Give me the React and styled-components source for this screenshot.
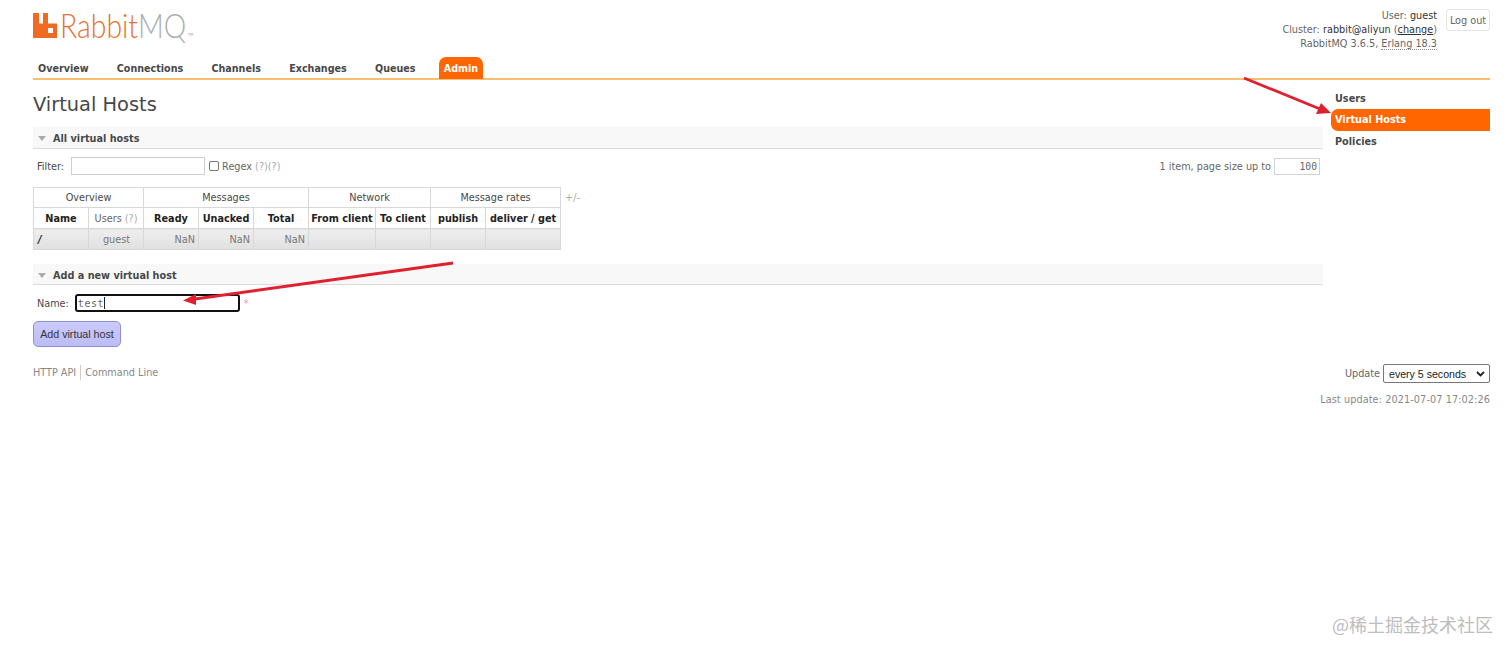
import React from "react";
import styled, { createGlobalStyle } from "styled-components";

const Global = createGlobalStyle`
  html, body { margin: 0; padding: 0; background: #fff; }
  body { font-family: "DejaVu Sans", Verdana, sans-serif; font-size: 9.7px; color: #484848; }
`;

const Page = styled.div`
  position: relative;
  width: 1512px;
  height: 653px;
  overflow: hidden;
  padding: 0 22px 0 33px;
  box-sizing: border-box;
`;

const Header = styled.header`
  height: 80px;
  box-sizing: border-box;
  border-bottom: 2px solid #fbbd72;
  display: flex;
  flex-direction: column;
  justify-content: space-between;
`;

const TopRow = styled.div`
  display: flex;
  justify-content: space-between;
  align-items: flex-start;
`;

const Logo = styled.div`
  display: flex;
  align-items: flex-start;
  gap: 3px;
  margin-top: 13px;
  height: 25px;
  svg { flex: none; }
`;

const LogoText = styled.div`
  display: flex;
  transform: scaleX(0.86);
  transform-origin: left center;
`;

const LogoWord = styled.span`
  font-family: "Lato", sans-serif;
  font-weight: 300;
  font-size: 33px;
  line-height: 25px;
  color: ${(p) => p.$color};
`;

const LogoMark = styled.span`
  font-size: 4px;
  line-height: 6px;
  color: #aaa;
  align-self: flex-end;
  margin-left: 2px;
`;

const Status = styled.div`
  display: flex;
  gap: 9px;
  margin-top: 9px;
`;

const StatusLines = styled.div`
  text-align: right;
  line-height: 14px;
  color: #666;
`;

const Strong = styled.span`
  color: #333;
`;

const Underlined = styled.span`
  color: #333;
  text-decoration: underline;
`;

const Abbr = styled.span`
  border-bottom: 1px dotted #888;
`;

const LogoutButton = styled.div`
  width: 44px;
  height: 22px;
  box-sizing: border-box;
  border: 1px solid #e4e4e4;
  border-radius: 3px;
  color: #666;
  display: flex;
  align-items: center;
  justify-content: center;
`;

const Nav = styled.nav`
  display: flex;
  gap: 18.200px;
  margin-bottom: -1px;
`;

const NavItem = styled.div`
  height: 22px;
  padding: 0 5px;
  display: flex;
  align-items: center;
  font-size: 9.600px;
  font-weight: 700;
  color: ${(p) => (p.$active ? "#fff" : "#484848")};
  background: ${(p) => (p.$active ? "#ff6600" : "transparent")};
  border-radius: 7px 7px 0 0;
`;

const Body = styled.div`
  display: flex;
  align-items: flex-start;
`;

const Main = styled.main`
  width: 1290px;
  flex: none;
`;

const Title = styled.h1`
  margin: 0;
  height: 47px;
  font-size: 19.400px;
  font-weight: 400;
  line-height: 49px;
  color: #484848;
`;

const Side = styled.aside`
  margin-left: 8px;
  flex: 1;
  padding-top: 7.500px;
`;

const SideItem = styled.div`
  height: 21.500px;
  box-sizing: border-box;
  padding-left: 4px;
  display: flex;
  align-items: center;
  font-weight: 700;
  color: ${(p) => (p.$active ? "#fff" : "#484848")};
  background: ${(p) => (p.$active ? "#ff6600" : "transparent")};
  border-radius: 7px 0 0 7px;
`;

const SectionBar = styled.div`
  height: 21.500px;
  box-sizing: border-box;
  background: #f8f8f8;
  border-bottom: 1px solid #dcdcdc;
  display: flex;
  align-items: center;
  gap: 7px;
  padding-left: 5px;
  padding-top: 2px;
  font-weight: 700;
  color: #484848;
`;

const Triangle = styled.span`
  width: 0;
  height: 0;
  border-left: 4.500px solid transparent;
  border-right: 4.500px solid transparent;
  border-top: 5px solid #aaa;
`;

const FilterRow = styled.div`
  display: flex;
  align-items: center;
  height: 18px;
  margin-top: 8.500px;
  padding-left: 4px;
`;

const Muted = styled.span`
  color: ${(p) => p.$c || "#666"};
`;

const TextInput = styled.div`
  box-sizing: border-box;
  width: ${(p) => p.$w}px;
  height: 18px;
  border: 1px solid #cfcfcf;
  background: #fff;
  margin: 0 4px 0 7px;
`;

const CheckBox = styled.span`
  box-sizing: border-box;
  width: 10px;
  height: 10px;
  border: 1px solid #777;
  border-radius: 2px;
  margin-right: 3px;
`;

const PageSize = styled.div`
  margin-left: auto;
  margin-right: 3px;
  display: flex;
  align-items: center;
  color: #666;
`;

const SizeBox = styled.div`
  box-sizing: border-box;
  width: 46px;
  height: 17px;
  border: 1px solid #d4d4d4;
  margin-left: 3px;
  text-align: right;
  padding-right: 2px;
  line-height: 15px;
  font-family: "DejaVu Sans Mono", monospace;
  font-size: 9.700px;
  color: #666;
`;

const TableWrap = styled.div`
  display: flex;
  align-items: flex-start;
  margin-top: 12.300px;
`;

const Table = styled.table`
  border-collapse: collapse;
  table-layout: fixed;
  width: 527px;
`;

const GroupCell = styled.th`
  height: 20px;
  box-sizing: border-box;
  padding: 0;
  font-weight: 400;
  color: #484848;
  border: 1px solid #d8d8d8;
  background: #fff;
`;

const HeadCell = styled.th`
  height: 21px;
  box-sizing: border-box;
  padding: 0;
  font-weight: ${(p) => (p.$light ? 400 : 700)};
  color: ${(p) => (p.$light ? "#666" : "#222")};
  border: 1px solid #d8d8d8;
  background: #fff;
  white-space: nowrap;
`;

const DataCell = styled.td`
  height: 21px;
  box-sizing: border-box;
  padding: 0 3px 0 4px;
  border: 1px solid #d8d8d8;
  background: linear-gradient(#eeeeee, #e0e0e0);
  color: ${(p) => (p.$strong ? "#222" : "#777")};
  font-weight: ${(p) => (p.$strong ? 700 : 400)};
  font-style: ${(p) => (p.$strong ? "italic" : "normal")};
  text-align: ${(p) => p.$align || "right"};
`;

const PlusMinus = styled.span`
  margin: 5px 0 0 4px;
  color: #aaa;
`;

const AddSection = styled.section`
  margin-top: 13.700px;
`;

const NameRow = styled.div`
  display: flex;
  align-items: center;
  height: 18px;
  margin-top: 9px;
  padding-left: 4px;
`;

const NameInput = styled.div`
  box-sizing: border-box;
  width: 165px;
  height: 18px;
  margin-left: 6px;
  border: 2px solid #111;
  border-radius: 3px;
  padding-left: 1px;
  display: flex;
  align-items: center;
  font-family: "DejaVu Sans Mono", monospace;
  font-size: 10px;
  letter-spacing: 0.500px;
  color: #666;
`;

const Caret = styled.span`
  width: 1px;
  height: 12px;
  background: #222;
`;

const Required = styled.span`
  color: #e99;
  margin-left: 4px;
`;

const AddButton = styled.div`
  box-sizing: border-box;
  width: 88px;
  height: 26px;
  margin-top: 9px;
  padding-bottom: 1px;
  border: 1px solid #8f8fd8;
  border-radius: 5px;
  background: linear-gradient(#cbcbff, #bcbcf5);
  color: #333;
  font-family: "Liberation Sans", Arial, sans-serif;
  font-size: 10.700px;
  display: flex;
  align-items: center;
  justify-content: center;
`;

const Footer = styled.footer`
  display: flex;
  justify-content: space-between;
  align-items: flex-start;
  margin-top: 17px;
  width: 1457px;
`;

const FooterLinks = styled.div`
  display: flex;
  align-items: center;
  margin-top: 1px;
  color: #888;
`;

const FooterLink = styled.span`
  padding: 0 ${(p) => (p.$last ? 0 : 4)}px 0 ${(p) => (p.$last ? 4 : 0)}px;
  border-left: ${(p) => (p.$last ? "1px solid #ccc" : "none")};
  line-height: 15px;
`;

const UpdateBox = styled.div`
  text-align: right;
  color: #666;
`;

const UpdateRow = styled.div`
  display: flex;
  align-items: center;
  justify-content: flex-end;
  gap: 3px;
`;

const Select = styled.div`
  box-sizing: border-box;
  width: 107px;
  height: 19px;
  border: 1px solid #777;
  border-radius: 2px;
  padding: 0 4px 0 5px;
  display: flex;
  align-items: center;
  justify-content: space-between;
  font-family: "Liberation Sans", Arial, sans-serif;
  font-size: 10.600px;
  color: #222;
`;

const LastUpdate = styled.div`
  margin-top: 11px;
  color: #888;
  letter-spacing: 0.100px;
`;

const Overlay = styled.svg`
  position: absolute;
  left: 0;
  top: 0;
  pointer-events: none;
`;

const Watermark = styled.div`
  position: absolute;
  left: 1332px;
  top: 612px;
  font-family: "Noto Sans CJK SC", sans-serif;
  font-size: 18px;
  line-height: 24px;
  color: #bdbdbd;
  white-space: nowrap;
`;

const NAV = ["Overview", "Connections", "Channels", "Exchanges", "Queues"];
const WIDTHS = [55, 55, 55, 55, 55, 67, 55, 55, 75];

function RabbitLogo() {
  return (
    <Logo>
      <svg width="24" height="25" viewBox="0 0 24 25">
        <path
          fill="#f06a22"
          fillRule="evenodd"
          d="M0 0H6V10.500H10V0H15V10.500H24V25H0ZM15 15V20H20V15Z"
        />
      </svg>
      <LogoText>
        <LogoWord $color="#e9702e">Rabbit</LogoWord>
        <LogoWord $color="#a9b0ae">MQ</LogoWord>
        <LogoMark>TM</LogoMark>
      </LogoText>
    </Logo>
  );
}

export default function App() {
  return (
    <Page>
      <Global />
      <Header>
        <TopRow>
          <RabbitLogo />
          <Status>
            <StatusLines>
              <div>User: <Strong>guest</Strong></div>
              <div>Cluster: <Strong>rabbit@aliyun</Strong> (<Underlined>change</Underlined>)</div>
              <div>RabbitMQ 3.6.5, <Abbr>Erlang 18.3</Abbr></div>
            </StatusLines>
            <LogoutButton>Log out</LogoutButton>
          </Status>
        </TopRow>
        <Nav>
          {NAV.map((n) => <NavItem key={n}>{n}</NavItem>)}
          <NavItem $active>Admin</NavItem>
        </Nav>
      </Header>

      <Body>
        <Main>
          <Title>Virtual Hosts</Title>
          <section>
            <SectionBar><Triangle />All virtual hosts</SectionBar>
            <FilterRow>
              <Muted $c="#484848">Filter:</Muted>
              <TextInput $w={134} />
              <CheckBox />
              <Muted>Regex <Muted $c="#aaa">(?)(?)</Muted></Muted>
              <PageSize>1 item, page size up to <SizeBox>100</SizeBox></PageSize>
            </FilterRow>
            <TableWrap>
              <Table>
                <colgroup>
                  {WIDTHS.map((w, i) => <col key={i} style={{ width: w }} />)}
                </colgroup>
                <thead>
                  <tr>
                    <GroupCell colSpan={2}>Overview</GroupCell>
                    <GroupCell colSpan={3}>Messages</GroupCell>
                    <GroupCell colSpan={2}>Network</GroupCell>
                    <GroupCell colSpan={2}>Message rates</GroupCell>
                  </tr>
                  <tr>
                    <HeadCell>Name</HeadCell>
                    <HeadCell $light>Users <Muted $c="#aaa">(?)</Muted></HeadCell>
                    <HeadCell>Ready</HeadCell>
                    <HeadCell>Unacked</HeadCell>
                    <HeadCell>Total</HeadCell>
                    <HeadCell>From client</HeadCell>
                    <HeadCell>To client</HeadCell>
                    <HeadCell>publish</HeadCell>
                    <HeadCell>deliver / get</HeadCell>
                  </tr>
                </thead>
                <tbody>
                  <tr>
                    <DataCell $strong $align="left">/</DataCell>
                    <DataCell $align="center">guest</DataCell>
                    <DataCell>NaN</DataCell>
                    <DataCell>NaN</DataCell>
                    <DataCell>NaN</DataCell>
                    <DataCell />
                    <DataCell />
                    <DataCell />
                    <DataCell />
                  </tr>
                </tbody>
              </Table>
              <PlusMinus>+/-</PlusMinus>
            </TableWrap>
          </section>

          <AddSection>
            <SectionBar><Triangle />Add a new virtual host</SectionBar>
            <NameRow>
              <Muted $c="#484848">Name:</Muted>
              <NameInput>test<Caret /></NameInput>
              <Required>*</Required>
            </NameRow>
            <AddButton>Add virtual host</AddButton>
          </AddSection>

          <Footer>
            <FooterLinks>
              <FooterLink>HTTP API</FooterLink>
              <FooterLink $last>Command Line</FooterLink>
            </FooterLinks>
            <UpdateBox>
              <UpdateRow>
                Update
                <Select>
                  every 5 seconds
                  <svg width="9" height="6" viewBox="0 0 9 6">
                    <path d="M1 1L4.500 4.500L8 1" fill="none" stroke="#222" strokeWidth="1.800" />
                  </svg>
                </Select>
              </UpdateRow>
              <LastUpdate>Last update: 2021-07-07 17:02:26</LastUpdate>
            </UpdateBox>
          </Footer>
        </Main>
        <Side>
          <SideItem>Users</SideItem>
          <SideItem $active>Virtual Hosts</SideItem>
          <SideItem>Policies</SideItem>
        </Side>
      </Body>

      <Overlay width="1512" height="653" viewBox="0 0 1512 653">
        <path d="M1244 78L1320 109" stroke="#e0202f" strokeWidth="2.800" fill="none" />
        <path d="M1331 113L1316 114L1321 103Z" fill="#e0202f" />
        <path d="M453 263L195 299" stroke="#e0202f" strokeWidth="2.800" fill="none" />
        <path d="M183 300.500L196 294L196 305Z" fill="#e0202f" />
      </Overlay>
      <Watermark>@稀土掘金技术社区</Watermark>
    </Page>
  );
}
